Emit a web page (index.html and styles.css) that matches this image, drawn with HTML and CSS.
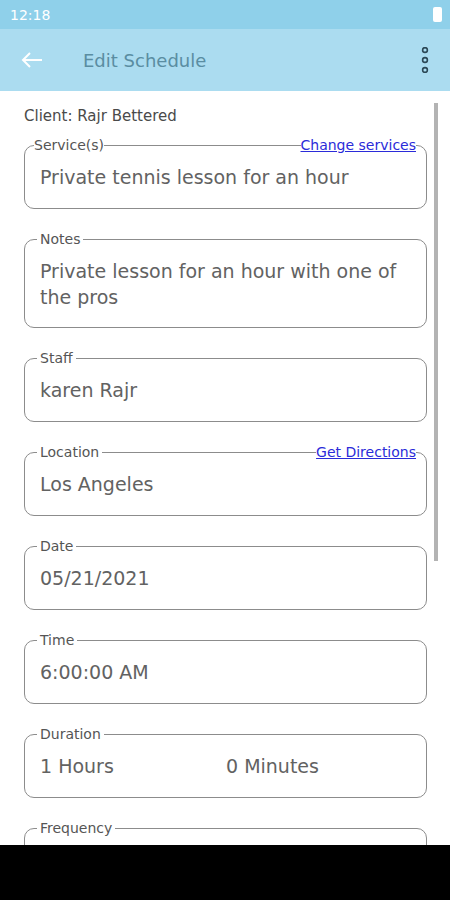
FILE: index.html
```html
<!DOCTYPE html>
<html lang="en">
<head>
  <meta charset="UTF-8" />
  <title>Edit Schedule</title>
  <link rel="stylesheet" href="styles.css">
</head>
<body>

  <div class="status-bar">
    <span class="clock">12:18</span>
    <span class="battery"></span>
  </div>

  <header class="app-bar">
    <svg class="back" width="22" height="16" viewBox="0 0 22 16">
      <path d="M21 8H2M9 1L2 8l7 7" fill="none" stroke="#fff" stroke-width="2"/>
    </svg>
    <h1>Edit Schedule</h1>
    <svg class="more" width="10" height="26" viewBox="0 0 10 26">
      <circle cx="5" cy="3" r="2.4" fill="none" stroke="#2c4856" stroke-width="1.6"/>
      <circle cx="5" cy="13" r="2.4" fill="none" stroke="#2c4856" stroke-width="1.6"/>
      <circle cx="5" cy="23" r="2.4" fill="none" stroke="#2c4856" stroke-width="1.6"/>
    </svg>
  </header>

  <main class="content">
    <div class="scrollbar"></div>
    <p class="client">Client: Rajr Bettered</p>

    <fieldset class="field">
      <legend class="legend-wide">
        <span>Service(s)</span>
        <span class="line"></span>
        <a href="#">Change services</a>
      </legend>
      <div class="value">Private tennis lesson for an hour</div>
    </fieldset>

    <fieldset class="field">
      <legend>Notes</legend>
      <div class="value multi">Private lesson for an hour with one of the pros</div>
    </fieldset>

    <fieldset class="field">
      <legend>Staff</legend>
      <div class="value">karen Rajr</div>
    </fieldset>

    <fieldset class="field">
      <legend class="legend-wide spaced">
        <span class="pad">Location</span>
        <span class="line"></span>
        <a href="#">Get Directions</a>
      </legend>
      <div class="value">Los Angeles</div>
    </fieldset>

    <fieldset class="field">
      <legend>Date</legend>
      <div class="value">05/21/2021</div>
    </fieldset>

    <fieldset class="field">
      <legend>Time</legend>
      <div class="value">6:00:00 AM</div>
    </fieldset>

    <fieldset class="field">
      <legend>Duration</legend>
      <div class="value split">
        <span>1 Hours</span>
        <span>0 Minutes</span>
      </div>
    </fieldset>

    <fieldset class="field">
      <legend>Frequency</legend>
      <div class="value empty"></div>
    </fieldset>
  </main>

  <div class="nav-bar"></div>

</body>
</html>
```

FILE: styles.css
```css
body {
  margin: 0;
  width: 450px;
  height: 900px;
  font-family: "DejaVu Sans", sans-serif;
  background: #fff;
  overflow: hidden;
}

/* Barre du haut */
.status-bar {
  height: 29px;
  background: #8fd0ea;
  display: flex;
  align-items: center;
  justify-content: space-between;
  padding: 0 8px 0 10px;
}
.clock {
  color: #fff;
  font-size: 14px;
}
.battery {
  width: 9px;
  height: 15px;
  background: #fff;
  border-radius: 2px;
}
.app-bar {
  height: 62px;
  background: #abdcf0;
  display: flex;
  align-items: center;
  padding: 0 20px 0 21px;
}
.app-bar h1 {
  flex: 1;
  margin: 0 0 0 40px;
  font-size: 18px;
  font-weight: normal;
  color: #5a8da2;
}

/* Contenu */
.content {
  position: relative;
  height: 754px;
  overflow: hidden;
  padding: 0 23px 0 24px;
}
.scrollbar {
  position: absolute;
  top: 12px;
  left: 434px;
  width: 4px;
  height: 458px;
  background: #b3b3b3;
}
.client {
  margin: 15px 0 11px;
  font-size: 15px;
  line-height: 20px;
  color: #4a4a4a;
}
.field {
  margin: 0 0 22px;
  padding: 0 14px 0 15px;
  border: 1px solid #8c8c8c;
  border-radius: 10px;
}
.field legend {
  font-size: 14px;
  line-height: 16px;
  color: #555;
  margin-left: -3px;
  padding: 0 3px;
}
.field .legend-wide {
  display: flex;
  align-items: center;
  width: calc(100% + 10px);
  margin-left: -6px;
  padding: 0;
}
.field .legend-wide.spaced {
  width: calc(100% + 7px);
  margin-left: -3px;
}
.legend-wide .pad {
  padding: 0 3px;
}
.legend-wide .line {
  flex: 1;
  border-top: 1px solid #8c8c8c;
  margin-top: 1px;
}
.legend-wide a {
  color: #2b2bd9;
  font-size: 14px;
}
.value {
  padding: 11px 0 18px;
  font-size: 19px;
  line-height: 26px;
  color: #626262;
}
.value.multi {
  padding-bottom: 17px;
}
.value.empty {
  height: 26px;
}
.split {
  display: grid;
  grid-template-columns: 1fr 1fr;
}

.nav-bar {
  height: 55px;
  background: #000;
}
```
